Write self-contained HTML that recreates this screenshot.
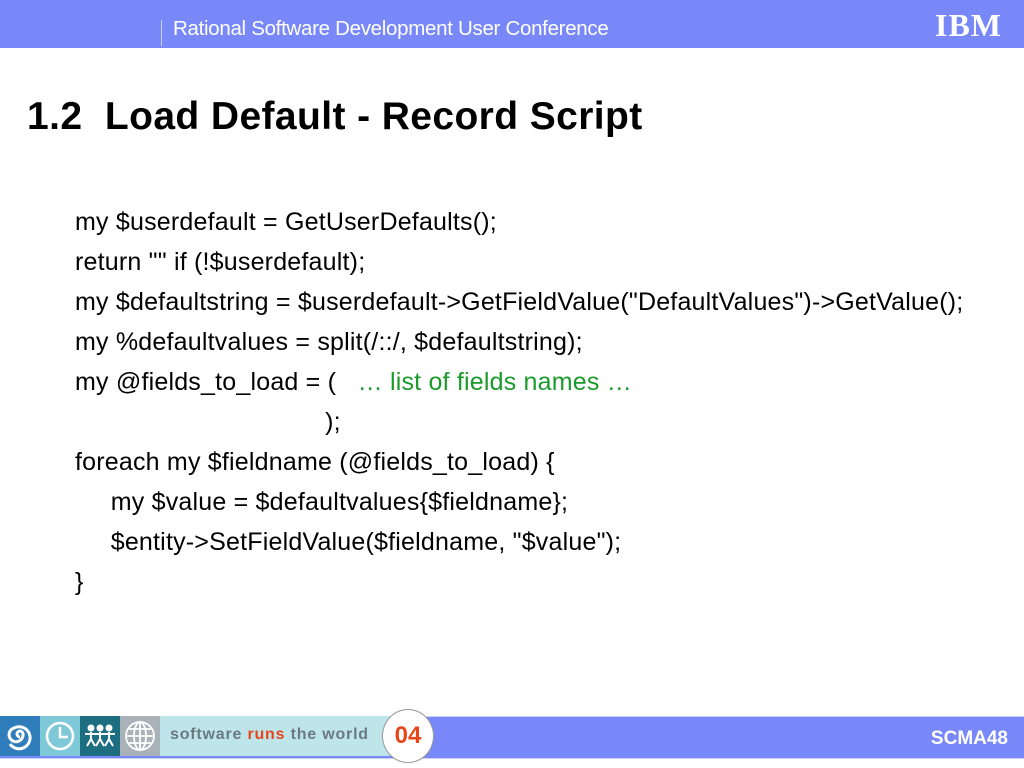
<!DOCTYPE html>
<html><head><meta charset="utf-8"><style>
body{margin:0;width:1024px;height:768px;background:#fff;position:relative;overflow:hidden;font-family:"Liberation Sans",Arial,sans-serif}
.hdr{position:absolute;left:0;top:0;width:1024px;height:48px;background:#7888f8}
.hdr .bar{position:absolute;left:161px;top:20px;width:1px;height:26px;background:#c8d0ff}
.hdr .t{position:absolute;left:173px;top:17px;color:#fff;font-size:20.5px;letter-spacing:-0.3px}
.ibm{position:absolute;left:935px;top:7px;color:#fff;font-weight:bold;font-size:32px;letter-spacing:1px;font-family:"Liberation Serif",serif;}
h1{position:absolute;left:27px;top:95px;margin:0;font-size:39px;letter-spacing:0.4px;font-weight:bold;color:#000}
.code{position:absolute;left:75px;top:202px;font-size:25px;letter-spacing:0.2px;line-height:40px;color:#000;white-space:pre}
.g{color:#1a9a2a}
.ft{position:absolute;left:0;top:716px;width:1024px;height:41px;background:#7888f8;border-top:1px solid #c8d4ff;border-bottom:1px solid #c8d4ff}
.tile{position:absolute;top:716px;height:40px;width:40px}
.sw{position:absolute;left:160px;top:716px;width:230px;height:40px;background:#bde5ea}
.sw span{position:absolute;left:10px;top:10px;font-size:16px;font-weight:bold;color:#6a7a80;letter-spacing:0.8px}
.circ{position:absolute;left:382px;top:709px;width:50px;height:52px;border-radius:50%;background:#fff;border:1px solid #999;text-align:center;line-height:52px;color:#e8461a;font-weight:bold;font-size:24px}
.sc{position:absolute;right:16px;top:728px;color:#fff;font-weight:bold;font-size:19px}
</style></head><body>
<div class="hdr"><div class="bar"></div><div class="t">Rational Software Development User Conference</div><div class="ibm">IBM</div></div>
<h1>1.2&nbsp; Load Default - Record Script</h1>
<div class="code">my $userdefault = GetUserDefaults();
return "" if (!$userdefault);
my $defaultstring = $userdefault-&gt;GetFieldValue("DefaultValues")-&gt;GetValue();
my %defaultvalues = split(/::/, $defaultstring);
my @fields_to_load = (   <span class="g">… list of fields names …</span>
                                   );
foreach my $fieldname (@fields_to_load) {
     my $value = $defaultvalues{$fieldname};
     $entity-&gt;SetFieldValue($fieldname, "$value");
}</div>
<div class="ft"></div>
<div class="tile" style="left:0;background:#2f7dbb"><svg width="40" height="40"><path d="M20 21a3 3 0 1 1 3-3a7 7 0 1 1-9-6a11 11 0 1 1-4 16" fill="none" stroke="#fff" stroke-width="3"/></svg></div>
<div class="tile" style="left:40px;background:#7ec8d8"><svg width="40" height="40"><circle cx="20" cy="20" r="13" fill="none" stroke="#fff" stroke-width="2.5"/><path d="M20 11v10h8" fill="none" stroke="#fff" stroke-width="2.5"/></svg></div>
<div class="tile" style="left:80px;background:#1d6e80"><svg width="40" height="40" fill="none" stroke="#fff" stroke-width="2"><circle cx="11" cy="12" r="2.5" fill="#fff"/><circle cx="20" cy="12" r="2.5" fill="#fff"/><circle cx="29" cy="12" r="2.5" fill="#fff"/><path d="M5 18h30M11 16v7l-4 7M11 23l4 7M20 16v7l-4 7M20 23l4 7M29 16v7l-4 7M29 23l4 7"/></svg></div>
<div class="tile" style="left:120px;background:#a8b2b8"><svg width="40" height="40" fill="none" stroke="#fff" stroke-width="1.8"><circle cx="20" cy="20" r="14"/><ellipse cx="20" cy="20" rx="6" ry="14"/><path d="M6 20h28M20 6v28M9 13h22M9 27h22"/></svg></div>
<div class="sw"><span>software <span style="position:static;color:#e8461a">runs</span> the world</span></div>
<div class="circ">04</div>
<div class="sc">SCMA48</div>
</body></html>
